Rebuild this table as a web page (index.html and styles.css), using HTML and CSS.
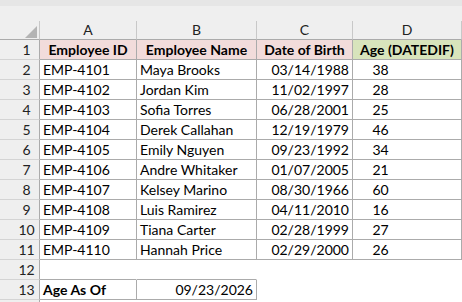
FILE: index.html
```html
<!DOCTYPE html>
<html>
<head>
<meta charset="utf-8">
<link rel="stylesheet" href="styles.css">
</head>
<body>
<div class="sheet">
  <div class="topbar"></div>
  <div class="gapbar"></div>
  <div class="row colhead">
    <div class="corner"><span class="tri"></span></div>
    <div class="ch">A</div>
    <div class="ch">B</div>
    <div class="ch">C</div>
    <div class="ch">D</div>
  </div>
  <div class="row">
    <div class="rh">1</div>
    <div class="c hdr pink">Employee ID</div>
    <div class="c hdr pink">Employee Name</div>
    <div class="c hdr pink">Date of Birth</div>
    <div class="c hdr green">Age (DATEDIF)</div>
  </div>
  <div class="row"><div class="rh">2</div><div class="c">EMP-4101</div><div class="c">Maya Brooks</div><div class="c r">03/14/1988</div><div class="c n"><span>38</span></div></div>
  <div class="row"><div class="rh">3</div><div class="c">EMP-4102</div><div class="c">Jordan Kim</div><div class="c r">11/02/1997</div><div class="c n"><span>28</span></div></div>
  <div class="row"><div class="rh">4</div><div class="c">EMP-4103</div><div class="c">Sofia Torres</div><div class="c r">06/28/2001</div><div class="c n"><span>25</span></div></div>
  <div class="row"><div class="rh">5</div><div class="c">EMP-4104</div><div class="c">Derek Callahan</div><div class="c r">12/19/1979</div><div class="c n"><span>46</span></div></div>
  <div class="row"><div class="rh">6</div><div class="c">EMP-4105</div><div class="c">Emily Nguyen</div><div class="c r">09/23/1992</div><div class="c n"><span>34</span></div></div>
  <div class="row"><div class="rh">7</div><div class="c">EMP-4106</div><div class="c">Andre Whitaker</div><div class="c r">01/07/2005</div><div class="c n"><span>21</span></div></div>
  <div class="row"><div class="rh">8</div><div class="c">EMP-4107</div><div class="c">Kelsey Marino</div><div class="c r">08/30/1966</div><div class="c n"><span>60</span></div></div>
  <div class="row"><div class="rh">9</div><div class="c">EMP-4108</div><div class="c">Luis Ramirez</div><div class="c r">04/11/2010</div><div class="c n"><span>16</span></div></div>
  <div class="row"><div class="rh">10</div><div class="c">EMP-4109</div><div class="c">Tiana Carter</div><div class="c r">02/28/1999</div><div class="c n"><span>27</span></div></div>
  <div class="row"><div class="rh">11</div><div class="c">EMP-4110</div><div class="c">Hannah Price</div><div class="c r">02/29/2000</div><div class="c n"><span>26</span></div></div>
  <div class="row blank">
    <div class="rh">12</div>
    <div class="c e eb"></div>
    <div class="c e eb"></div>
    <div class="c e"></div>
    <div class="c e"></div>
  </div>
  <div class="row">
    <div class="rh">13</div>
    <div class="c b">Age As Of</div>
    <div class="c r">09/23/2026</div>
    <div class="c e"></div>
    <div class="c e"></div>
  </div>
  <div class="row tail">
    <div class="rh"></div>
    <div class="c e"></div>
    <div class="c e"></div>
    <div class="c e"></div>
    <div class="c e"></div>
  </div>
</div>
</body>
</html>
```
FILE: styles.css
```css
* { box-sizing: border-box; }
html, body { margin: 0; padding: 0; background: #fff; }
body { width: 462px; height: 302px; overflow: hidden; }
.sheet {
  font-family: Lato, "Open Sans", sans-serif;
  font-size: 14px;
  color: #000;
}
.topbar { height: 6px; background: #e6e6e6; }
.gapbar { height: 15px; background: #efefef; }
.row {
  display: grid;
  grid-template-columns: 40px 97px 120px 96px 109px;
  height: 20px;
}
.row.tail { height: 2px; }
.colhead { height: 19px; background: #efefef; }
.corner {
  position: relative;
  border-right: 1px solid #c8c8c8;
  border-bottom: 1px solid #ababab;
}
.tri {
  position: absolute;
  left: 25px; top: 5px;
  width: 0; height: 0;
  border-left: 12px solid transparent;
  border-bottom: 12px solid #b4b4b4;
}
.ch {
  border-right: 1px solid #c8c8c8;
  border-bottom: 1px solid #ababab;
  text-align: center;
  line-height: 18px;
  color: #222;
}
.rh {
  background: #efefef;
  border-right: 1px solid #ababab;
  border-bottom: 1px solid #d4d4d4;
  padding-left: 14px;
  text-align: center;
  line-height: 19px;
  color: #222;
}
.tail .rh { border-bottom: 0; }
.c {
  border-right: 1px solid #ababab;
  border-bottom: 1px solid #ababab;
  padding: 0 3px;
  line-height: 19px;
  white-space: nowrap;
  overflow: hidden;
}
.hdr { font-weight: 700; text-align: center; padding: 0; }
.pink { background: #f2dcdb; }
.green { background: #d8e4bc; }
.r { text-align: right; }
.b { font-weight: 700; }
.n { padding: 0; }
.n span { display: inline-block; width: 55px; text-align: center; }
.e { border-color: transparent; }
.eb { border-bottom-color: #ababab; }
```
